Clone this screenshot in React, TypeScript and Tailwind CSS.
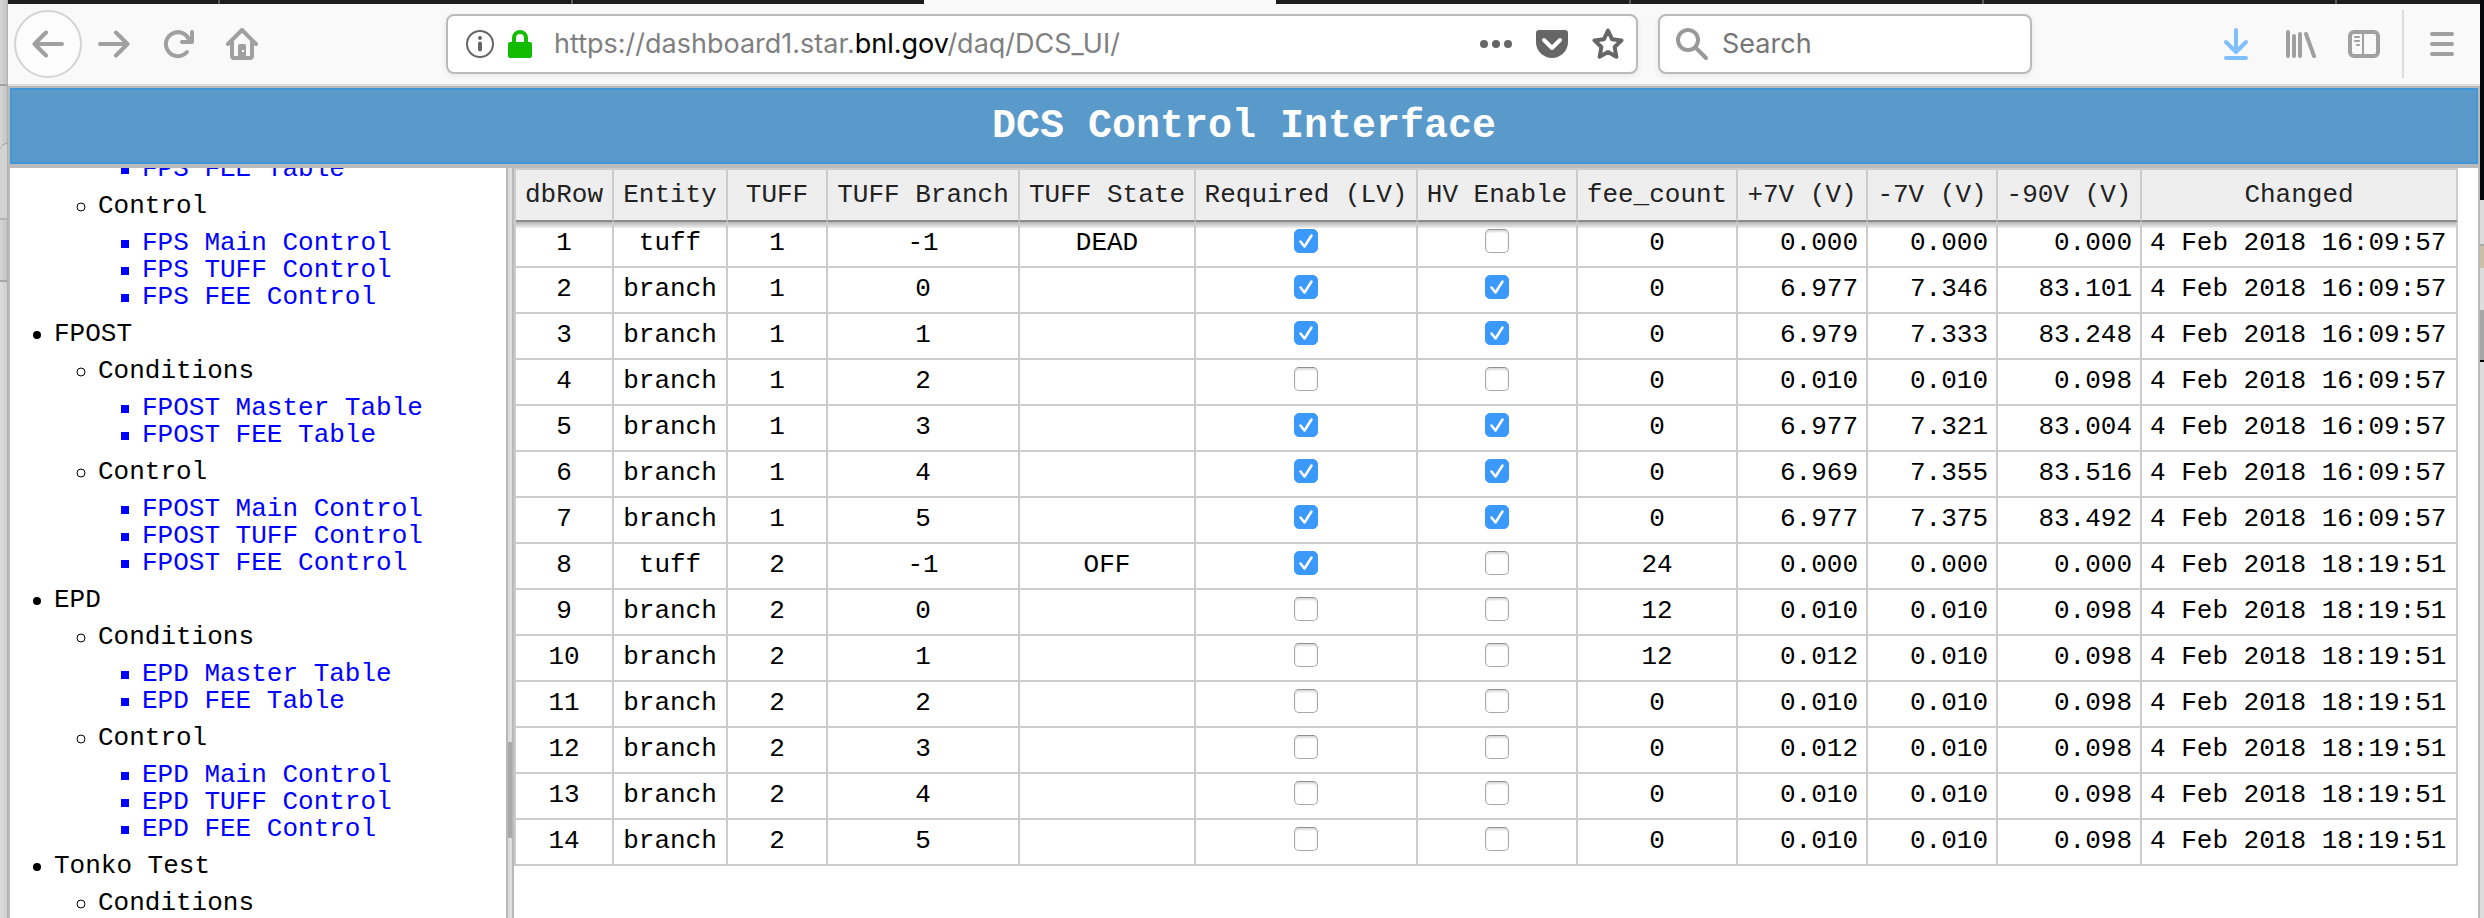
import { useState, type ReactNode } from "react";

type Row = {
  id: number;
  entity: "tuff" | "branch";
  tuff: number;
  branch: number;
  state?: string;
  lv: boolean;
  hv: boolean;
  fees: number;
  p7: string;
  m7: string;
  m90: string;
  changed: string;
};

const T1 = "4 Feb 2018 16:09:57";
const T2 = "4 Feb 2018 18:19:51";

const ROWS: Row[] = [
  { id: 1, entity: "tuff", tuff: 1, branch: -1, state: "DEAD", lv: true, hv: false, fees: 0, p7: "0.000", m7: "0.000", m90: "0.000", changed: T1 },
  { id: 2, entity: "branch", tuff: 1, branch: 0, lv: true, hv: true, fees: 0, p7: "6.977", m7: "7.346", m90: "83.101", changed: T1 },
  { id: 3, entity: "branch", tuff: 1, branch: 1, lv: true, hv: true, fees: 0, p7: "6.979", m7: "7.333", m90: "83.248", changed: T1 },
  { id: 4, entity: "branch", tuff: 1, branch: 2, lv: false, hv: false, fees: 0, p7: "0.010", m7: "0.010", m90: "0.098", changed: T1 },
  { id: 5, entity: "branch", tuff: 1, branch: 3, lv: true, hv: true, fees: 0, p7: "6.977", m7: "7.321", m90: "83.004", changed: T1 },
  { id: 6, entity: "branch", tuff: 1, branch: 4, lv: true, hv: true, fees: 0, p7: "6.969", m7: "7.355", m90: "83.516", changed: T1 },
  { id: 7, entity: "branch", tuff: 1, branch: 5, lv: true, hv: true, fees: 0, p7: "6.977", m7: "7.375", m90: "83.492", changed: T1 },
  { id: 8, entity: "tuff", tuff: 2, branch: -1, state: "OFF", lv: true, hv: false, fees: 24, p7: "0.000", m7: "0.000", m90: "0.000", changed: T2 },
  { id: 9, entity: "branch", tuff: 2, branch: 0, lv: false, hv: false, fees: 12, p7: "0.010", m7: "0.010", m90: "0.098", changed: T2 },
  { id: 10, entity: "branch", tuff: 2, branch: 1, lv: false, hv: false, fees: 12, p7: "0.012", m7: "0.010", m90: "0.098", changed: T2 },
  { id: 11, entity: "branch", tuff: 2, branch: 2, lv: false, hv: false, fees: 0, p7: "0.010", m7: "0.010", m90: "0.098", changed: T2 },
  { id: 12, entity: "branch", tuff: 2, branch: 3, lv: false, hv: false, fees: 0, p7: "0.012", m7: "0.010", m90: "0.098", changed: T2 },
  { id: 13, entity: "branch", tuff: 2, branch: 4, lv: false, hv: false, fees: 0, p7: "0.010", m7: "0.010", m90: "0.098", changed: T2 },
  { id: 14, entity: "branch", tuff: 2, branch: 5, lv: false, hv: false, fees: 0, p7: "0.010", m7: "0.010", m90: "0.098", changed: T2 },
];

const COLUMNS = [
  { label: "dbRow", width: "w-[98px]" },
  { label: "Entity", width: "w-[114px]" },
  { label: "TUFF", width: "w-[100px]" },
  { label: "TUFF Branch", width: "w-[192px]" },
  { label: "TUFF State", width: "w-[176px]" },
  { label: "Required (LV)", width: "w-[222px]" },
  { label: "HV Enable", width: "w-[160px]" },
  { label: "fee_count", width: "w-[160px]" },
  { label: "+7V (V)", width: "w-[130px]" },
  { label: "-7V (V)", width: "w-[130px]" },
  { label: "-90V (V)", width: "w-[144px]" },
  { label: "Changed", width: "w-[316px]" },
];

type Group = { title: string; links: string[] };
type System = { name: string; groups: Group[] };

// the menu is scrolled, so it starts with the rest of the FPS branch
const FPS_CONTROL: Group = {
  title: "Control",
  links: ["FPS Main Control", "FPS TUFF Control", "FPS FEE Control"],
};

const SYSTEMS: System[] = [
  {
    name: "FPOST",
    groups: [
      { title: "Conditions", links: ["FPOST Master Table", "FPOST FEE Table"] },
      { title: "Control", links: ["FPOST Main Control", "FPOST TUFF Control", "FPOST FEE Control"] },
    ],
  },
  {
    name: "EPD",
    groups: [
      { title: "Conditions", links: ["EPD Master Table", "EPD FEE Table"] },
      { title: "Control", links: ["EPD Main Control", "EPD TUFF Control", "EPD FEE Control"] },
    ],
  },
  { name: "Tonko Test", groups: [{ title: "Conditions", links: [] }] },
];

function Icon({ children, className = "text-[#a0a0a0]" }: { children: ReactNode; className?: string }) {
  return (
    <svg
      viewBox="0 0 32 32"
      className={`size-8 shrink-0 ${className}`}
      fill="none"
      stroke="currentColor"
      strokeWidth="4"
      strokeLinecap="round"
      strokeLinejoin="round"
      aria-hidden="true"
    >
      {children}
    </svg>
  );
}

function ToolButton({ label, children }: { label: string; children: ReactNode }) {
  return (
    <button type="button" aria-label={label} className="flex h-16 w-16 shrink-0 items-center justify-center">
      {children}
    </button>
  );
}

function TabStrip() {
  return (
    <div className="flex h-1 shrink-0 bg-[#1d1d1d]">
      <div className="w-[210px]" />
      <div className="w-[353px] border-l-2 border-[#5a5a5a]" />
      <div className="w-[353px] border-l-2 border-[#5a5a5a]" />
      <div className="w-[352px] bg-[#f9f9f9]" />
      <div className="w-[353px]" />
      <div className="w-[353px] border-l-2 border-[#5a5a5a]" />
      <div className="w-[353px] border-l-2 border-[#5a5a5a]" />
      <div className="flex-1 border-l-2 border-[#5a5a5a]" />
    </div>
  );
}

function Toolbar() {
  return (
    <div className="flex h-[82px] shrink-0 items-center border-b-2 border-[#dedede] bg-[#f9f9f9] px-1.5 font-['Inter','Liberation_Sans',sans-serif] text-[27px]">
      <button
        type="button"
        aria-label="Back"
        className="flex size-[68px] shrink-0 items-center justify-center rounded-full border-2 border-[#d4d4d4] bg-[#fcfcfc]"
      >
        <Icon>
          <path d="M2.5 16H30M14 4.500 2.500 16 14 27.500" />
        </Icon>
      </button>
      <ToolButton label="Forward">
        <Icon>
          <path d="M2 16h27.500M18 4.500 29.500 16 18 27.500" />
        </Icon>
      </ToolButton>
      <ToolButton label="Reload">
        <Icon>
          <path d="M25 24A12 12 0 1 1 26.500 10.500M30 4v10H20" />
        </Icon>
      </ToolButton>
      <ToolButton label="Home">
        <Icon>
          <path d="M2 16 16 2l14 14M6 14v14q0 2 2 2h16q2 0 2-2V14" />
          <path d="M12 30V18q0-2 2-2h4q2 0 2 2v12z" fill="currentColor" stroke="none" />
          <path d="M16 22h2v2h-2z" fill="#fff" stroke="none" />
        </Icon>
      </ToolButton>

      <div className="w-[172px] shrink-0" />

      <div className="flex h-[60px] min-w-0 flex-1 items-center rounded-lg border-2 border-[#bababa] bg-white pr-3 pl-[18px] shadow-[0_2px_6px_rgba(0,0,0,0.08)]">
        <button type="button" aria-label="Site information" className="shrink-0">
          <svg viewBox="0 0 28 28" className="size-7" fill="none" aria-hidden="true">
            <circle cx="14" cy="14" r="13" stroke="#666" strokeWidth="2" />
            <circle cx="14" cy="8" r="2" fill="#666" />
            <path d="M14 13.500v6" stroke="#666" strokeWidth="4" strokeLinecap="round" />
          </svg>
        </button>
        <svg viewBox="0 0 24 28" className="ml-3.5 h-7 w-6 shrink-0" fill="none" aria-hidden="true">
          <path d="M6 13V8a6 6 0 0 1 12 0v5" stroke="#12bc00" strokeWidth="4" />
          <rect y="12" width="24" height="16" rx="2" fill="#12bc00" />
        </svg>
        <div
          role="textbox"
          aria-label="Address"
          contentEditable
          suppressContentEditableWarning
          className="ml-[22px] min-w-0 flex-1 overflow-hidden whitespace-nowrap text-[#7f7f7f] outline-none"
        >
          https://dashboard1.star.<span className="text-black">bnl.gov</span>/daq/DCS_UI/
        </div>
        <div className="flex gap-6">
          <button type="button" aria-label="Page actions">
            <Icon className="text-[#666]">
              <g fill="currentColor" stroke="none">
                <circle cx="4" cy="16" r="4" />
                <circle cx="16" cy="16" r="4" />
                <circle cx="28" cy="16" r="4" />
              </g>
            </Icon>
          </button>
          <button type="button" aria-label="Save to Pocket">
            <Icon className="text-[#666]">
              <path d="M3 2h26q3 0 3 3v9a16 16 0 0 1-32 0V5q0-3 3-3z" fill="currentColor" stroke="none" />
              <path d="m8 12 8 8 8-8" stroke="#fff" />
            </Icon>
          </button>
          <button type="button" aria-label="Bookmark this page">
            <Icon className="text-[#666]">
              <path d="M16 2.500 20 11.200 29.500 12.400 22.600 19 24.400 28.800 16 24 7.600 28.800 9.400 19 2.500 12.400 12 11.200z" />
            </Icon>
          </button>
        </div>
      </div>

      <label className="ml-5 flex h-[60px] w-[374px] shrink-0 items-center gap-3.5 rounded-lg border-2 border-[#bababa] bg-white px-4 shadow-[0_2px_6px_rgba(0,0,0,0.08)]">
        <Icon className="text-[#999]">
          <circle cx="12" cy="12" r="10" />
          <path d="m19.500 19.500 10.500 10.500" />
        </Icon>
        <input
          type="text"
          aria-label="Search"
          placeholder="Search"
          className="min-w-0 flex-1 outline-none placeholder:text-[#757575]"
        />
      </label>

      <div className="w-[172px] shrink-0" />

      <ToolButton label="Downloads">
        <Icon className="text-[#80bfff]">
          <path d="M16 2v22M6 14l10 10 10-10M6 30h20" />
        </Icon>
      </ToolButton>
      <ToolButton label="Library">
        <Icon>
          <path d="M4 4v24M10 8v20M16 6v22M22 6l8 22" />
        </Icon>
      </ToolButton>
      <ToolButton label="Sidebars">
        <Icon>
          <rect x="2" y="4" width="28" height="24" rx="4" />
          <path d="M15 4v24M7 9h4M7 13h4M9 17h2" strokeWidth="2" />
        </Icon>
      </ToolButton>
      <div className="mx-1.5 h-[68px] w-0.5 shrink-0 bg-[#dedede]" />
      <ToolButton label="Menu">
        <Icon>
          <path d="M6 6h20M6 16h20M6 26h20" />
        </Icon>
      </ToolButton>
    </div>
  );
}

function Bullet({ kind }: { kind: "disc" | "circle" | "square" }) {
  return (
    <svg viewBox="0 0 8 8" className="size-2 shrink-0 overflow-visible" aria-hidden="true">
      {kind === "disc" && <circle cx="4" cy="4" r="4" />}
      {kind === "circle" && <circle cx="4" cy="4" r="4" fill="none" stroke="#000" />}
      {kind === "square" && <rect width="8" height="8" fill="#00f" />}
    </svg>
  );
}

function MenuLink({ text }: { text: string }) {
  return (
    <li className="flex items-center gap-[13px]">
      <Bullet kind="square" />
      <a href="#" className="text-[#00f]">
        {text}
      </a>
    </li>
  );
}

function MenuGroup({ group }: { group: Group }) {
  return (
    <li>
      <div className="flex items-center gap-[13px]">
        <Bullet kind="circle" />
        {group.title}
      </div>
      <ul className="my-2.5 pl-11">
        {group.links.map((l) => (
          <MenuLink key={l} text={l} />
        ))}
      </ul>
    </li>
  );
}

function Sidebar() {
  return (
    <nav className="w-[496px] shrink-0 overflow-hidden bg-white leading-[27px] whitespace-nowrap">
      <div className="-mt-3 pl-[23px]">
        <ul className="mb-2.5 pl-[88px]">
          <MenuLink text="FPS FEE Table" />
        </ul>
        <ul className="my-2.5 pl-11">
          <MenuGroup group={FPS_CONTROL} />
        </ul>
        <ul>
          {SYSTEMS.map((s) => (
            <li key={s.name}>
              <div className="flex items-center gap-[13px]">
                <Bullet kind="disc" />
                {s.name}
              </div>
              <ul className="my-2.5 pl-11">
                {s.groups.map((g) => (
                  <MenuGroup key={g.title} group={g} />
                ))}
              </ul>
            </li>
          ))}
        </ul>
      </div>
    </nav>
  );
}

function CheckCell({ label, initial }: { label: string; initial: boolean }) {
  const [on, setOn] = useState(initial);
  return (
    <div className="relative mx-auto mb-1 size-6">
      <input
        type="checkbox"
        aria-label={label}
        checked={on}
        onChange={() => setOn(!on)}
        className="block size-6 appearance-none rounded-[5px] border border-[#a8a8a8] border-t-[#909090] bg-white shadow-[inset_0_2px_2px_rgba(0,0,0,0.14)] checked:border-[#3b99fc] checked:bg-[#3b99fc] checked:shadow-none"
      />
      {on && (
        <svg viewBox="0 0 24 24" className="pointer-events-none absolute inset-0 size-6" fill="none" aria-hidden="true">
          <path d="m6.500 12.500 4 5L17.500 6.500" stroke="#fff" strokeWidth="2.500" strokeLinecap="round" strokeLinejoin="round" />
        </svg>
      )}
    </div>
  );
}

function FeeTable() {
  const cell = "border-r-2 border-b-2 border-[#ccc] pb-0.5 text-center";
  const num = "border-r-2 border-b-2 border-[#ccc] px-2 pb-0.5 text-right";
  return (
    <table className="table-fixed border-separate border-spacing-0 border-t-2 border-l-2 border-[#ccc] whitespace-nowrap">
      <colgroup>
        {COLUMNS.map((c) => (
          <col key={c.label} className={c.width} />
        ))}
      </colgroup>
      <thead>
        <tr className="h-[52px]">
          {COLUMNS.map((c) => (
            <th
              key={c.label}
              scope="col"
              className="border-r-2 border-b-2 border-r-[#ccc] border-b-[#8c8c8c] bg-[#eee] font-normal text-[#222]"
            >
              {c.label}
            </th>
          ))}
        </tr>
      </thead>
      <tbody>
        {ROWS.map((r) => (
          <tr key={r.id} className="h-[46px] first:bg-[linear-gradient(#b4b4b4,#f0f0f0_6px,#fff_6px)]">
            <td className={cell}>{r.id}</td>
            <td className={cell}>{r.entity}</td>
            <td className={cell}>{r.tuff}</td>
            <td className={cell}>{r.branch}</td>
            <td className={cell}>{r.state}</td>
            <td className={cell}>
              <CheckCell label={`Required (LV), row ${r.id}`} initial={r.lv} />
            </td>
            <td className={cell}>
              <CheckCell label={`HV Enable, row ${r.id}`} initial={r.hv} />
            </td>
            <td className={cell}>{r.fees}</td>
            <td className={num}>{r.p7}</td>
            <td className={num}>{r.m7}</td>
            <td className={num}>{r.m90}</td>
            <td className="border-r-2 border-b-2 border-[#ccc] px-2 pb-0.5 text-left">{r.changed}</td>
          </tr>
        ))}
      </tbody>
    </table>
  );
}

// slivers of the windows that lie behind the browser
function LeftEdge() {
  return (
    <div className="flex w-2 shrink-0 flex-col border-r border-[#b0b0b0] bg-linear-to-r from-[#d6d6d6] to-[#c4c4c4]">
      <div className="h-[86px] border-b-2 border-[#a2a2a2]" />
      <div className="h-[57px]" />
      <div className="h-[77px] rounded-tl-lg border-t border-b-2 border-t-[#999] border-b-[#b4b4b4] bg-[#d2d2d2]" />
      <div className="h-[62px] border-b-2 border-[#a8a8a8]" />
      <div className="flex-1 bg-linear-to-r from-[#dcdcdc] to-[#cfcfcf]" />
    </div>
  );
}

function RightEdge() {
  return (
    <div className="flex w-1 shrink-0 flex-col bg-[#dcdcdc]">
      <div className="h-[200px] bg-[#05070c]" />
      <div className="h-[46px] border-b-2 border-[#aaa]" />
      <div className="h-[22px] bg-[#c8bfa6]" />
      <div className="h-[42px]" />
      <div className="h-[52px] border-b-2 border-black bg-[#a6a6a6]" />
    </div>
  );
}

export default function App() {
  return (
    <div className="flex h-screen overflow-hidden font-['Liberation_Mono','Courier_New',monospace] text-[26px] text-black">
      <LeftEdge />
      <div className="flex min-w-0 flex-1 flex-col">
        <TabStrip />
        <Toolbar />
        <div className="flex min-h-0 flex-1 flex-col border-x-2 border-t-2 border-[#bababa]">
          <header className="flex h-[76px] shrink-0 items-center justify-center border-2 border-[#4196d8] bg-[#5a9acb] pt-0.5">
            <h1 className="text-[40px] font-bold text-white">DCS Control Interface</h1>
          </header>
          <div className="flex min-h-0 flex-1 border-t-4 border-[#bababa]">
            <Sidebar />
            <div className="flex w-2 shrink-0 flex-col justify-end border-x-2 border-[#b8b8b8] bg-[#dedede] pb-20">
              <div className="h-24 bg-[#a9a9a9]" />
            </div>
            <main className="min-w-0 flex-1 overflow-hidden bg-white">
              <FeeTable />
            </main>
          </div>
        </div>
      </div>
      <RightEdge />
    </div>
  );
}
